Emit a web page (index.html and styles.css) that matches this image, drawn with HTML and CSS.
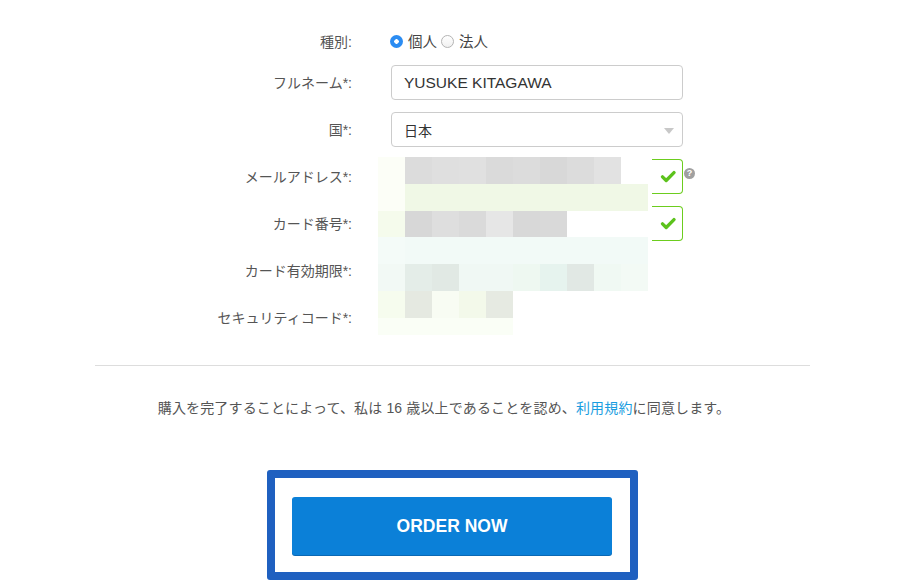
FILE: index.html
```html
<!DOCTYPE html>
<html lang="ja">
<head>
<meta charset="utf-8">
<title>Order</title>
<link rel="stylesheet" href="styles.css">
</head>
<body>
<div class="page">
  <form class="form">
    <div class="lbl">種別:</div>
    <div class="field radios">
      <span class="radio on"></span><span class="rtext">個人</span>
      <span class="radio"></span><span class="rtext">法人</span>
    </div>
    <div class="cell-empty"></div>

    <div class="lbl">フルネーム*:</div>
    <div class="field input">YUSUKE KITAGAWA</div>
    <div class="cell-empty"></div>

    <div class="lbl">国*:</div>
    <div class="field input select"><span>日本</span><span class="caret"></span></div>
    <div class="cell-empty"></div>

    <div class="lbl">メールアドレス*:</div>
    <div class="field group">
      <div class="blank"></div>
      <div class="addon"><svg class="check" width="16" height="14" viewBox="0 0 16 14"><path d="M2.5 6.8 L6.2 10.5 L14 2.6" fill="none" stroke="#5cc21c" stroke-width="3.3" stroke-linecap="round" stroke-linejoin="round"/></svg></div>
      <span class="help">?</span>
    </div>
    <div class="cell-empty"></div>

    <div class="lbl">カード番号*:</div>
    <div class="field group">
      <div class="blank"></div>
      <div class="addon"><svg class="check" width="16" height="14" viewBox="0 0 16 14"><path d="M2.5 6.8 L6.2 10.5 L14 2.6" fill="none" stroke="#5cc21c" stroke-width="3.3" stroke-linecap="round" stroke-linejoin="round"/></svg></div>
    </div>
    <div class="cell-empty"></div>

    <div class="lbl">カード有効期限*:</div>
    <div class="field"></div>
    <div class="cell-empty"></div>

    <div class="lbl">セキュリティコード*:</div>
    <div class="field"></div>
    <div class="cell-empty"></div>

    <svg class="mosaic" width="270" height="178" viewBox="0 0 270 178">
      <!-- row 1 -->
      <rect x="0" y="0" width="27" height="27" fill="#fcfef7"/>
      <rect x="27" y="0" width="27" height="27" fill="#dcdcdc"/>
      <rect x="54" y="0" width="27" height="27" fill="#dfdfdf"/>
      <rect x="81" y="0" width="27" height="27" fill="#e0e0e0"/>
      <rect x="108" y="0" width="27" height="27" fill="#dadada"/>
      <rect x="135" y="0" width="27" height="27" fill="#dcdcdc"/>
      <rect x="162" y="0" width="27" height="27" fill="#d8d8d8"/>
      <rect x="189" y="0" width="27" height="27" fill="#dcdcdc"/>
      <rect x="216" y="0" width="27" height="27" fill="#e2e2e2"/>
      <!-- row 2 -->
      <rect x="0" y="27" width="27" height="27" fill="#fcfef7"/>
      <rect x="27" y="27" width="243" height="27" fill="#f0f8e6"/>
      <!-- row 3 -->
      <rect x="0" y="54" width="27" height="26" fill="#f5fbec"/>
      <rect x="27" y="54" width="27" height="26" fill="#d7d7d7"/>
      <rect x="54" y="54" width="27" height="26" fill="#dedede"/>
      <rect x="81" y="54" width="27" height="26" fill="#dadada"/>
      <rect x="108" y="54" width="27" height="26" fill="#e6e6e6"/>
      <rect x="135" y="54" width="27" height="26" fill="#d8d8d8"/>
      <rect x="162" y="54" width="27" height="26" fill="#d9d9d9"/>
      <!-- row 4 -->
      <rect x="0" y="80" width="27" height="27" fill="#f4fbf8"/>
      <rect x="27" y="80" width="243" height="27" fill="#f2faf7"/>
      <!-- row 5 -->
      <rect x="0" y="107" width="27" height="27" fill="#f2f9f5"/>
      <rect x="27" y="107" width="27" height="27" fill="#e4ede8"/>
      <rect x="54" y="107" width="27" height="27" fill="#e1e9e4"/>
      <rect x="81" y="107" width="27" height="27" fill="#f0f8f4"/>
      <rect x="108" y="107" width="27" height="27" fill="#f0f8f4"/>
      <rect x="135" y="107" width="27" height="27" fill="#eef8f1"/>
      <rect x="162" y="107" width="27" height="27" fill="#e6f3ee"/>
      <rect x="189" y="107" width="27" height="27" fill="#e1e8e4"/>
      <rect x="216" y="107" width="27" height="27" fill="#f0f9f3"/>
      <rect x="243" y="107" width="27" height="27" fill="#f3faf5"/>
      <!-- row 6 -->
      <rect x="0" y="134" width="27" height="27" fill="#f6fcee"/>
      <rect x="27" y="134" width="27" height="27" fill="#e5e9e1"/>
      <rect x="54" y="134" width="27" height="27" fill="#f8fcf3"/>
      <rect x="81" y="134" width="27" height="27" fill="#f3f9ea"/>
      <rect x="108" y="134" width="27" height="27" fill="#e6eae2"/>
      <!-- row 7 -->
      <rect x="0" y="161" width="135" height="17" fill="#fafef6"/>
    </svg>
  </form>

  <div class="divider"></div>

  <p class="terms">購入を完了することによって、私は 16 歳以上であることを認め、<a class="link" href="#">利用規約</a>に同意します。</p>

  <div class="focus-box">
    <button class="order" type="button">ORDER NOW</button>
  </div>
</div>
</body>
</html>
```

FILE: styles.css
```css
* { box-sizing: border-box; }

html, body {
  margin: 0;
  padding: 0;
  background: #ffffff;
}

body {
  font-family: "Liberation Sans", "Noto Sans CJK JP", sans-serif;
  color: #555555;
  width: 916px;
  height: 588px;
  overflow: hidden;
}

.page {
  width: 715px;
  margin-left: 95px;
}

.form {
  position: relative;
  display: grid;
  grid-template-columns: 257px 292px 1fr;
  grid-template-rows: 23px repeat(6, 35px);
  column-gap: 39px;
  row-gap: 12px;
  padding-top: 30px;
  margin: 0;
}

.lbl {
  align-self: center;
  text-align: right;
  font-size: 14px;
  line-height: 20px;
  color: #555555;
  white-space: nowrap;
}

.field {
  position: relative;
}

.radios {
  display: flex;
  align-items: center;
  font-size: 14.5px;
  color: #444444;
}

.radio {
  width: 13px;
  height: 13px;
  border-radius: 50%;
  border: 1px solid #b4b4b4;
  background: linear-gradient(#ffffff, #f0f0f0);
  margin-left: -1px;
  margin-right: 5px;
  flex: none;
}

.radio.on {
  border: none;
  background: radial-gradient(circle, #ffffff 0 2px, #2b8cf2 2.5px);
}

.rtext {
  margin-right: 5px;
  line-height: 20px;
}

.input {
  border: 1px solid #cccccc;
  border-radius: 4px;
  padding: 0 12px;
  font-size: 15.5px;
  color: #333333;
  display: flex;
  align-items: center;
}

.select {
  justify-content: space-between;
  padding-right: 8px;
  font-size: 14px;
}

.caret {
  width: 0;
  height: 0;
  border-left: 5px solid transparent;
  border-right: 5px solid transparent;
  border-top: 6px solid #c8c8c8;
  margin-top: 2px;
}

.group {
  display: flex;
}

.blank {
  flex: 1;
}

.addon {
  width: 31px;
  border: 1.5px solid #6ccd1e;
  border-left: none;
  border-radius: 0 4px 4px 0;
  display: flex;
  align-items: center;
  justify-content: center;
  background: #ffffff;
}

.check {
  display: block;
  margin-left: 1px;
  margin-top: 1px;
}

.help {
  position: absolute;
  left: 293px;
  top: 9px;
  width: 11px;
  height: 11px;
  border-radius: 50%;
  background: #a0a0a0;
  color: #ffffff;
  font-size: 9px;
  font-weight: bold;
  line-height: 11px;
  text-align: center;
}

.mosaic {
  position: absolute;
  left: 283px;
  top: 157px;
  display: block;
}

.divider {
  margin-top: 30px;
  border-top: 1px solid #dddddd;
  height: 0;
}

.terms {
  margin: 32px 0 0;
  padding-right: 17px;
  text-align: center;
  font-size: 14px;
  letter-spacing: 0.15px;
  line-height: 20px;
  color: #555555;
}

.link {
  color: #1a9de0;
  text-decoration: none;
}

.focus-box {
  width: 371px;
  margin: 52px auto 0;
  border: 8px solid #1f60c0;
  border-radius: 3px;
  padding: 19px 18px 17px 17px;
  background: #ffffff;
}

.order {
  display: block;
  width: 320px;
  height: 58px;
  border: none;
  border-radius: 3px;
  background: #0b80d8;
  box-shadow: 0 1px 0 #0a68b4;
  color: #ffffff;
  font-family: "Liberation Sans", Arial, sans-serif;
  font-size: 17.5px;
  font-weight: bold;
  cursor: pointer;
}
```
